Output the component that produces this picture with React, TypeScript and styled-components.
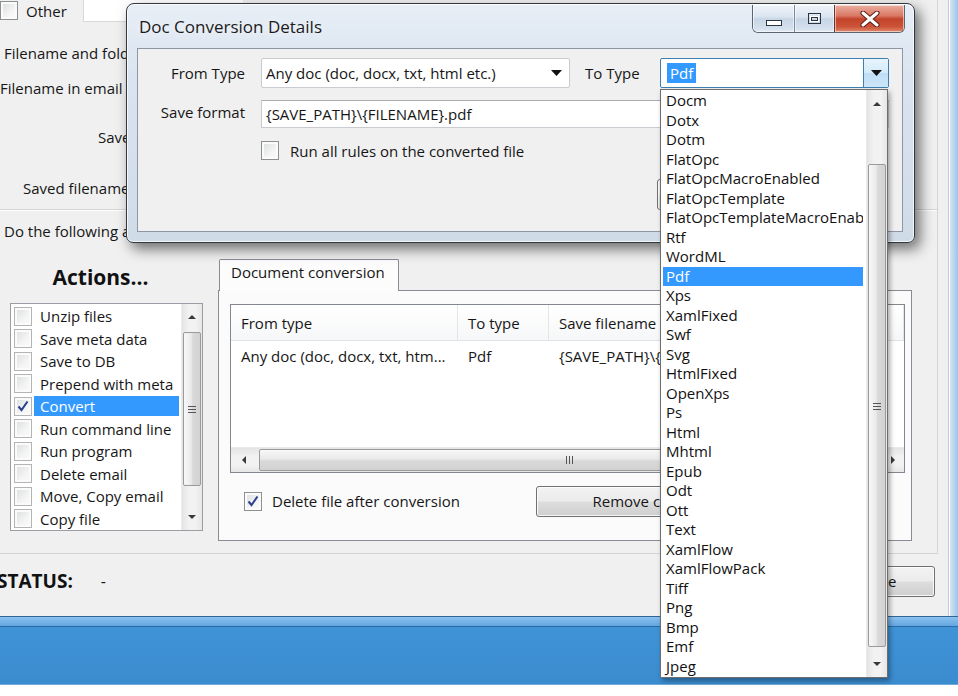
import React from "react";
import styled, { createGlobalStyle } from "styled-components";

const FONT = `"Open Sans", "Noto Sans", "DejaVu Sans", sans-serif`;

const GlobalStyle = createGlobalStyle`
  * { box-sizing: border-box; }
  html, body { margin: 0; padding: 0; background: #ffffff; }
  body { width: 958px; height: 696px; overflow: hidden; font-family: ${FONT}; }
`;

/* ---------- screen / main window ---------- */
const Screen = styled.div`
  position: relative;
  width: 958px;
  height: 696px;
  overflow: hidden;
  display: flex;
  flex-direction: column;
  font-family: ${FONT};
  font-size: 15px;
  color: #161616;
  background: #ffffff;
`;

const AppWindow = styled.div`
  height: 616px;
  flex: none;
  display: flex;
  background: #f0f0f0;
`;

const ClientArea = styled.div`
  width: 949px;
  flex: none;
  display: flex;
  flex-direction: column;
  border-right: 1px solid #c3ccd6;
`;

const FrameSide = styled.div`
  flex: 1;
  background: linear-gradient(90deg, #d4e4f4, #9cc4ea);
  border-left: 1px solid #ffffff;
`;

const MainPanel = styled.div`
  width: 938px;
  height: 554px;
  flex: none;
  display: flex;
  flex-direction: column;
  border-right: 1px solid #d4d4d4;
  border-bottom: 1px solid #d4d4d4;
`;

const FormArea = styled.div`
  height: 243px;
  flex: none;
  display: flex;
  flex-direction: column;
`;

const TopRow = styled.div`
  height: 22px;
  display: flex;
  align-items: center;
  gap: 8px;
`;

const TopField = styled.div`
  margin-left: 8px;
  align-self: flex-start;
  width: 160px;
  height: 22px;
  background: #ffffff;
  border-left: 1px solid #d9d9d9;
  border-bottom: 1px solid #d9d9d9;
`;

const FieldRow = styled.div<{ $top: number; $indent: number }>`
  margin-top: ${(p) => p.$top}px;
  height: 22px;
  display: flex;
  align-items: center;
  padding-left: ${(p) => p.$indent}px;
  white-space: nowrap;
`;

const Separator = styled.div<{ $top: number }>`
  margin-top: ${(p) => p.$top}px;
  height: 2px;
  border-top: 1px solid #d5d5d5;
  border-bottom: 1px solid #ffffff;
`;

const WorkArea = styled.div`
  flex: 1;
  display: flex;
  gap: 15px;
  padding: 15px 0 0 10px;
`;

const ActionsColumn = styled.div`
  width: 193px;
  flex: none;
  display: flex;
  flex-direction: column;
`;

const ActionsHeading = styled.div`
  height: 45px;
  display: flex;
  align-items: center;
  justify-content: center;
  padding: 0 12px 7px 0;
  font-size: 21px;
  font-weight: 700;
  color: #111;
`;

const CheckList = styled.div`
  height: 228px;
  display: flex;
  background: #ffffff;
  border: 1px solid #9a9da4;
`;

const CheckListItems = styled.div`
  flex: 1;
  display: flex;
  flex-direction: column;
  padding-top: 1px;
`;

const CheckItem = styled.div`
  height: 22.5px;
  display: flex;
  align-items: center;
  padding-left: 3px;
`;

const CheckItemLabel = styled.span<{ $selected?: boolean }>`
  flex: 1;
  margin: 0 2px 0 2px;
  height: 20px;
  line-height: 20px;
  padding-left: 6px;
  white-space: nowrap;
  overflow: hidden;
  background: ${(p) => (p.$selected ? "#3399ff" : "transparent")};
  color: ${(p) => (p.$selected ? "#ffffff" : "#161616")};
`;

/* ---------- tab control ---------- */
const TabControl = styled.div`
  width: 694px;
  flex: none;
  display: flex;
  flex-direction: column;
`;

const TabStrip = styled.div`
  height: 32px;
  display: flex;
  align-items: flex-end;
`;

const Tab = styled.div`
  margin-left: 1px;
  width: 180px;
  height: 32px;
  margin-bottom: -1px;
  padding: 2px 0 0 11px;
  background: #fcfcfc;
  border: 1px solid #898c95;
  border-bottom: none;
  border-radius: 2px 2px 0 0;
  position: relative;
  z-index: 1;
  white-space: nowrap;
`;

const TabPanel = styled.div`
  height: 251px;
  display: flex;
  flex-direction: column;
  padding: 13px 0 0 11px;
  background: #fbfbfb;
  border: 1px solid #898c95;
`;

const ListView = styled.div`
  width: 675px;
  height: 169px;
  display: flex;
  flex-direction: column;
  background: #ffffff;
  border: 1px solid #828790;
`;

const ListHeader = styled.div`
  height: 36px;
  display: flex;
  background: linear-gradient(#ffffff, #f6f7f8);
  border-bottom: 1px solid #e0e2e5;
`;

const HeaderCell = styled.div<{ $w?: number }>`
  ${(p) => (p.$w ? `width: ${p.$w}px; flex: none;` : "flex: 1;")}
  display: flex;
  align-items: center;
  padding-left: 10px;
  border-right: 1px solid #e3e5e8;
  white-space: nowrap;
  overflow: hidden;
`;

const ListRow = styled.div`
  margin-top: 4px;
  height: 22px;
  display: flex;
`;

const ListCell = styled.div<{ $w?: number }>`
  ${(p) => (p.$w ? `width: ${p.$w}px; flex: none;` : "flex: 1;")}
  display: flex;
  align-items: center;
  padding-left: 10px;
  white-space: nowrap;
  overflow: hidden;
`;

const Spacer = styled.div`
  flex: 1;
`;

const PanelFooter = styled.div`
  margin-top: 13px;
  height: 30px;
  display: flex;
  align-items: center;
`;

const CheckGroup = styled.label<{ $w?: number; $indent?: number; $gap?: number }>`
  display: flex;
  align-items: center;
  gap: ${(p) => p.$gap ?? 10}px;
  padding-left: ${(p) => p.$indent ?? 0}px;
  ${(p) => (p.$w ? `width: ${p.$w}px; flex: none;` : "")}
  white-space: nowrap;
`;

/* ---------- status ---------- */
const StatusRow = styled.div`
  flex: 1;
  display: flex;
  align-items: center;
  padding-bottom: 8px;
`;

const StatusLabel = styled.span`
  margin-left: -3px;
  font-size: 19px;
  font-weight: 700;
  color: #111;
`;

const StatusValue = styled.span`
  margin-left: 28px;
  font-size: 16px;
`;

/* ---------- bottom frame ---------- */
const FrameBottom = styled.div`
  height: 11px;
  flex: none;
  background: linear-gradient(#8cc2ee, #62a6e2);
  border-top: 1px solid #2f6597;
  border-bottom: 1px solid #2b6aa3;
`;

const Desktop = styled.div`
  height: 58px;
  flex: none;
  background: linear-gradient(#3f93d6, #3a8ccf);
  border-bottom: 1px solid #6fa9dc;
`;

const WhiteStrip = styled.div`
  flex: 1;
  background: #ffffff;
`;

/* ---------- common controls ---------- */
const Check = styled.span<{ $light?: boolean; $lift?: number }>`
  width: 18px;
  height: 19px;
  flex: none;
  margin-top: ${(p) => -(p.$lift ?? 0)}px;
  display: inline-flex;
  align-items: center;
  justify-content: center;
  border: 1px solid ${(p) => (p.$light ? "#b4b4b4" : "#8e8f8f")};
  background: linear-gradient(135deg, #d9dcdf 0%, #f4f4f4 60%, #fbfbfb 100%);
  box-shadow: inset 0 0 0 2px #fbfbfb;
`;

const WinButton = styled.div<{ $w: number; $ml?: number }>`
  width: ${(p) => p.$w}px;
  height: 31px;
  flex: none;
  margin-left: ${(p) => (p.$ml !== undefined ? `${p.$ml}px` : "0")};
  display: flex;
  align-items: center;
  justify-content: center;
  border: 1px solid #707070;
  border-radius: 3px;
  background: linear-gradient(#f3f3f3 0%, #ebebeb 48%, #dddddd 52%, #cfcfcf 100%);
  box-shadow: inset 0 0 0 1px rgba(255, 255, 255, 0.8);
  white-space: nowrap;
  overflow: hidden;
`;

const StatusButton = styled(WinButton)`
  margin-left: auto;
  margin-right: 13px;
`;

/* ---------- scrollbars ---------- */
const VTrack = styled.div`
  width: 21px;
  flex: none;
  display: flex;
  flex-direction: column;
  background: linear-gradient(90deg, #e4e4e4 0%, #f2f2f2 35%, #f2f2f2 70%, #e6e6e6 100%);
  border-left: 1px solid #eaeaea;
`;

const HTrack = styled.div`
  height: 25px;
  flex: none;
  display: flex;
  background: linear-gradient(#e4e4e4 0%, #f2f2f2 35%, #f2f2f2 70%, #e6e6e6 100%);
  border-top: 1px solid #eaeaea;
`;

const ArrowBox = styled.div<{ $size: number }>`
  flex: none;
  ${(p) => `flex-basis: ${p.$size}px;`}
  display: flex;
  align-items: center;
  justify-content: center;
`;

const VThumb = styled.div<{ $offset: number; $size: number }>`
  flex: none;
  margin: ${(p) => p.$offset}px 1px 0 1px;
  height: ${(p) => p.$size}px;
  display: flex;
  align-items: center;
  justify-content: center;
  border: 1px solid #9a9a9a;
  border-radius: 2px;
  background: linear-gradient(90deg, #f8f8f8 0%, #e9e9e9 45%, #d9d9d9 55%, #d2d2d2 100%);
`;

const HThumb = styled.div<{ $offset: number; $size: number }>`
  flex: none;
  margin: 1px 0 1px ${(p) => p.$offset}px;
  width: ${(p) => p.$size}px;
  display: flex;
  align-items: center;
  justify-content: center;
  border: 1px solid #9a9a9a;
  border-radius: 2px;
  background: linear-gradient(#f8f8f8 0%, #e9e9e9 45%, #d9d9d9 55%, #d2d2d2 100%);
`;

/* ---------- dialog ---------- */
const Dialog = styled.div`
  position: absolute;
  left: 126px;
  top: 3px;
  width: 789px;
  height: 240px;
  z-index: 5;
  display: flex;
  flex-direction: column;
  border: 1px solid #33383f;
  border-radius: 8px 8px 7px 7px;
  background: linear-gradient(180deg, #e7eef6 0%, #dae4f0 30%, #d0dbe8 100%);
  box-shadow: inset 0 0 0 1px rgba(255, 255, 255, 0.75), 5px 6px 14px rgba(0, 0, 0, 0.55);
`;

const TitleBar = styled.div`
  height: 44px;
  flex: none;
  display: flex;
  align-items: flex-start;
  padding-left: 12px;
`;

const Title = styled.div`
  margin-top: 11px;
  font-size: 17px;
  color: #1b1b1b;
  text-shadow: 0 0 8px rgba(255, 255, 255, 0.95);
  white-space: nowrap;
`;

const CaptionGroup = styled.div`
  margin: 1px 9px 0 auto;
  height: 28px;
  display: flex;
  border: 1px solid #5b6674;
  border-top: none;
  border-radius: 0 0 6px 6px;
  overflow: hidden;
`;

const CaptionButton = styled.div<{ $w: number; $close?: boolean }>`
  width: ${(p) => p.$w}px;
  height: 100%;
  display: flex;
  align-items: center;
  justify-content: center;
  border-left: ${(p) => (p.$close ? "1px solid #6c3328" : "1px solid #7d8899")};
  &:first-child {
    border-left: none;
  }
  background: ${(p) =>
    p.$close
      ? "linear-gradient(#eab0a2 0%, #d97763 40%, #c3432b 52%, #cc5337 80%, #e08b6e 100%)"
      : "linear-gradient(#eef3f9 0%, #dce6f1 42%, #c7d5e6 52%, #d3dfec 85%, #e3ebf5 100%)"};
  box-shadow: inset 0 0 0 1px rgba(255, 255, 255, 0.55);
`;

const DialogClient = styled.div`
  flex: 1;
  margin: 0 11px 10px 10px;
  display: flex;
  flex-direction: column;
  background: #f0f0f0;
  border: 1px solid #8d98a5;
`;

const DialogRow = styled.div<{ $top: number; $h: number }>`
  margin-top: ${(p) => p.$top}px;
  height: ${(p) => p.$h}px;
  flex: none;
  display: flex;
  align-items: center;
`;

const FieldLabel = styled.div<{ $w: number; $ml?: number; $lift?: number }>`
  width: ${(p) => p.$w}px;
  margin-left: ${(p) => p.$ml ?? 0}px;
  margin-top: ${(p) => -(p.$lift ?? 0)}px;
  flex: none;
  text-align: right;
  white-space: nowrap;
`;

const ToLabel = styled.div`
  width: 75px;
  margin-left: 15px;
  flex: none;
  white-space: nowrap;
`;

const Combo = styled.div<{ $w: number; $ml?: number; $focused?: boolean }>`
  width: ${(p) => p.$w}px;
  margin-left: ${(p) => p.$ml ?? 0}px;
  height: 30px;
  flex: none;
  display: flex;
  align-items: center;
  background: #ffffff;
  border: 1px solid ${(p) => (p.$focused ? "#3c7fb1" : "#c8cbcf")};
  border-radius: 2px;
`;

const ComboText = styled.span`
  flex: 1;
  padding-left: 4px;
  white-space: nowrap;
  overflow: hidden;
`;

const SelectedText = styled.span`
  margin-left: 2px;
  padding: 1px 3px;
  background: #3399ff;
  color: #ffffff;
`;

const ComboArrow = styled.div<{ $button?: boolean }>`
  width: 25px;
  align-self: stretch;
  flex: none;
  display: flex;
  align-items: center;
  justify-content: center;
  ${(p) =>
    p.$button
      ? "border-left: 1px solid #3c7fb1; background: linear-gradient(#e8f4fc 0%, #d4ebfa 48%, #bfdff7 52%, #cde6f8 100%);"
      : ""}
`;

const TextBox = styled.div<{ $w: number; $ml: number }>`
  width: ${(p) => p.$w}px;
  margin-left: ${(p) => p.$ml}px;
  height: 28px;
  flex: none;
  display: flex;
  align-items: center;
  padding-left: 4px;
  background: #ffffff;
  border: 1px solid #c8cbcf;
  border-top-color: #abadb3;
  white-space: nowrap;
`;

/* ---------- dropdown list ---------- */
const DropList = styled.div`
  position: absolute;
  left: 660px;
  top: 89px;
  width: 228px;
  height: 589px;
  z-index: 10;
  display: flex;
  background: #ffffff;
  border: 1px solid #6e6e6e;
  box-shadow: 2px 3px 5px rgba(0, 0, 0, 0.35);
`;

const DropItems = styled.div`
  flex: 1;
  min-width: 0;
  display: flex;
  flex-direction: column;
  padding: 1px 3px 0 2px;
  overflow: hidden;
`;

const DropItem = styled.div<{ $selected?: boolean }>`
  height: 19.5px;
  flex: none;
  line-height: 19.5px;
  padding-left: 3px;
  white-space: nowrap;
  overflow: hidden;
  background: ${(p) => (p.$selected ? "#3399ff" : "transparent")};
  color: ${(p) => (p.$selected ? "#ffffff" : "#111111")};
`;

/* ---------- icons ---------- */
const Tri = ({ dir, color = "#3a3a3a" }: { dir: "up" | "down" | "left" | "right"; color?: string }) => {
  const pts =
    dir === "up"
      ? "0,4 4,0 8,4"
      : dir === "down"
      ? "0,0 8,0 4,4"
      : dir === "left"
      ? "4,0 4,8 0,4"
      : "0,0 4,4 0,8";
  const horiz = dir === "left" || dir === "right";
  const w = horiz ? 4 : 8;
  const h = horiz ? 8 : 4;
  return (
    <svg width={w} height={h} viewBox={`0 0 ${w} ${h}`}>
      <polygon points={pts} fill={color} />
    </svg>
  );
};

const ComboTri = () => (
  <svg width="11" height="6" viewBox="0 0 11 6">
    <polygon points="0,0 11,0 5.5,6" fill="#111" />
  </svg>
);

const GripV = () => (
  <svg width="8" height="8" viewBox="0 0 8 8">
    <g stroke="#555" strokeWidth="1">
      <line x1="0" y1="1.5" x2="8" y2="1.5" />
      <line x1="0" y1="4.5" x2="8" y2="4.5" />
      <line x1="0" y1="7.5" x2="8" y2="7.5" />
    </g>
  </svg>
);

const GripH = () => (
  <svg width="8" height="8" viewBox="0 0 8 8">
    <g stroke="#555" strokeWidth="1">
      <line x1="1.5" y1="0" x2="1.5" y2="8" />
      <line x1="4.5" y1="0" x2="4.5" y2="8" />
      <line x1="7.5" y1="0" x2="7.5" y2="8" />
    </g>
  </svg>
);

const CheckMark = () => (
  <svg width="12" height="12" viewBox="0 0 12 12">
    <path d="M1.5 6.5 L4.5 10 L10.5 1.5" fill="none" stroke="#2a3f8e" strokeWidth="2" />
  </svg>
);

const MinGlyph = () => (
  <svg width="16" height="6" viewBox="0 0 16 6" style={{ marginTop: 9 }}>
    <rect x="0.5" y="0.5" width="15" height="5" fill="#ffffff" stroke="#2b3440" />
  </svg>
);

const MaxGlyph = () => (
  <svg width="13" height="11" viewBox="0 0 13 11">
    <rect x="0.5" y="0.5" width="12" height="10" fill="none" stroke="#2b3440" />
    <rect x="2.5" y="3.5" width="8" height="5" fill="none" stroke="#ffffff" />
    <rect x="3.5" y="4.5" width="6" height="3" fill="none" stroke="#2b3440" />
  </svg>
);

const CloseGlyph = () => (
  <svg width="20" height="16" viewBox="0 0 20 16">
    <path d="M3 2 L17 14 M17 2 L3 14" stroke="#5a1e14" strokeWidth="5" strokeLinecap="round" />
    <path d="M3 2 L17 14 M17 2 L3 14" stroke="#ffffff" strokeWidth="3" strokeLinecap="round" />
  </svg>
);

/* ---------- data ---------- */
const actions = [
  "Unzip files",
  "Save meta data",
  "Save to DB",
  "Prepend with meta",
  "Convert",
  "Run command line",
  "Run program",
  "Delete email",
  "Move, Copy email",
  "Copy file",
];

const types = [
  "Docm",
  "Dotx",
  "Dotm",
  "FlatOpc",
  "FlatOpcMacroEnabled",
  "FlatOpcTemplate",
  "FlatOpcTemplateMacroEnabled",
  "Rtf",
  "WordML",
  "Pdf",
  "Xps",
  "XamlFixed",
  "Swf",
  "Svg",
  "HtmlFixed",
  "OpenXps",
  "Ps",
  "Html",
  "Mhtml",
  "Epub",
  "Odt",
  "Ott",
  "Text",
  "XamlFlow",
  "XamlFlowPack",
  "Tiff",
  "Png",
  "Bmp",
  "Emf",
  "Jpeg",
];

export default function App() {
  return (
    <>
      <GlobalStyle />
      <Screen>
        <AppWindow>
          <ClientArea>
            <MainPanel>
              <FormArea>
                <TopRow>
                  <Check $lift={2} />
                  <span>Other</span>
                  <TopField />
                </TopRow>
                <FieldRow $top={20} $indent={4}>
                  Filename and folder rules
                </FieldRow>
                <FieldRow $top={13} $indent={0}>
                  Filename in email message
                </FieldRow>
                <FieldRow $top={27} $indent={98}>
                  Save folder
                </FieldRow>
                <FieldRow $top={29} $indent={23}>
                  Saved filename
                </FieldRow>
                <Separator $top={10} />
                <FieldRow $top={9} $indent={4}>
                  Do the following actions
                </FieldRow>
              </FormArea>

              <WorkArea>
                <ActionsColumn>
                  <ActionsHeading>Actions...</ActionsHeading>
                  <CheckList>
                    <CheckListItems>
                      {actions.map((a) => (
                        <CheckItem key={a}>
                          <Check $light>{a === "Convert" ? <CheckMark /> : null}</Check>
                          <CheckItemLabel $selected={a === "Convert"}>{a}</CheckItemLabel>
                        </CheckItem>
                      ))}
                    </CheckListItems>
                    <VTrack>
                      <ArrowBox $size={26}>
                        <Tri dir="up" />
                      </ArrowBox>
                      <VThumb $offset={2} $size={154}>
                        <GripV />
                      </VThumb>
                      <Spacer />
                      <ArrowBox $size={26}>
                        <Tri dir="down" />
                      </ArrowBox>
                    </VTrack>
                  </CheckList>
                </ActionsColumn>

                <TabControl>
                  <TabStrip>
                    <Tab>Document conversion</Tab>
                  </TabStrip>
                  <TabPanel>
                    <ListView>
                      <ListHeader>
                        <HeaderCell $w={227}>From type</HeaderCell>
                        <HeaderCell $w={91}>To type</HeaderCell>
                        <HeaderCell $w={290}>Save filename</HeaderCell>
                        <HeaderCell>Rule</HeaderCell>
                      </ListHeader>
                      <ListRow>
                        <ListCell $w={227}>Any doc (doc, docx, txt, htm...</ListCell>
                        <ListCell $w={91}>Pdf</ListCell>
                        <ListCell>{"{SAVE_PATH}\\{FILENAME}.pdf"}</ListCell>
                      </ListRow>
                      <Spacer />
                      <HTrack>
                        <ArrowBox $size={25}>
                          <Tri dir="left" />
                        </ArrowBox>
                        <HThumb $offset={3} $size={620}>
                          <GripH />
                        </HThumb>
                        <Spacer />
                        <ArrowBox $size={22}>
                          <Tri dir="right" />
                        </ArrowBox>
                      </HTrack>
                    </ListView>
                    <PanelFooter>
                      <CheckGroup $w={306} $indent={14}>
                        <Check>
                          <CheckMark />
                        </Check>
                        <span>Delete file after conversion</span>
                      </CheckGroup>
                      <WinButton $w={250}>Remove conversion</WinButton>
                    </PanelFooter>
                  </TabPanel>
                </TabControl>
              </WorkArea>
            </MainPanel>

            <StatusRow>
              <StatusLabel>STATUS:</StatusLabel>
              <StatusValue>-</StatusValue>
              <StatusButton $w={115}>Close</StatusButton>
            </StatusRow>
          </ClientArea>
          <FrameSide />
        </AppWindow>
        <FrameBottom />
        <Desktop />
        <WhiteStrip />

        <Dialog>
          <TitleBar>
            <Title>Doc Conversion Details</Title>
            <CaptionGroup>
              <CaptionButton $w={41}>
                <MinGlyph />
              </CaptionButton>
              <CaptionButton $w={40}>
                <MaxGlyph />
              </CaptionButton>
              <CaptionButton $w={70} $close>
                <CloseGlyph />
              </CaptionButton>
            </CaptionGroup>
          </TitleBar>
          <DialogClient>
            <DialogRow $top={9} $h={30}>
              <FieldLabel $w={107}>From Type</FieldLabel>
              <Combo $w={309} $ml={16}>
                <ComboText>Any doc (doc, docx, txt, html etc.)</ComboText>
                <ComboArrow>
                  <ComboTri />
                </ComboArrow>
              </Combo>
              <ToLabel>To Type</ToLabel>
              <Combo $w={229} $focused>
                <ComboText>
                  <SelectedText>Pdf</SelectedText>
                </ComboText>
                <ComboArrow $button>
                  <ComboTri />
                </ComboArrow>
              </Combo>
            </DialogRow>
            <DialogRow $top={12} $h={28}>
              <FieldLabel $w={107} $lift={5}>
                Save format
              </FieldLabel>
              <TextBox $w={628} $ml={16}>
                {"{SAVE_PATH}\\{FILENAME}.pdf"}
              </TextBox>
            </DialogRow>
            <DialogRow $top={13} $h={19}>
              <CheckGroup $indent={123} $gap={11}>
                <Check />
                <span>Run all rules on the converted file</span>
              </CheckGroup>
            </DialogRow>
            <DialogRow $top={18} $h={32}>
              <WinButton $w={90} $ml={519}>
                OK
              </WinButton>
              <WinButton $w={90} $ml={10}>
                Cancel
              </WinButton>
            </DialogRow>
          </DialogClient>
        </Dialog>

        <DropList>
          <DropItems>
            {types.map((t) => (
              <DropItem key={t} $selected={t === "Pdf"}>
                {t}
              </DropItem>
            ))}
          </DropItems>
          <VTrack>
            <ArrowBox $size={27}>
              <Tri dir="up" />
            </ArrowBox>
            <VThumb $offset={47} $size={483}>
              <GripV />
            </VThumb>
            <Spacer />
            <ArrowBox $size={27}>
              <Tri dir="down" />
            </ArrowBox>
          </VTrack>
        </DropList>
      </Screen>
    </>
  );
}
